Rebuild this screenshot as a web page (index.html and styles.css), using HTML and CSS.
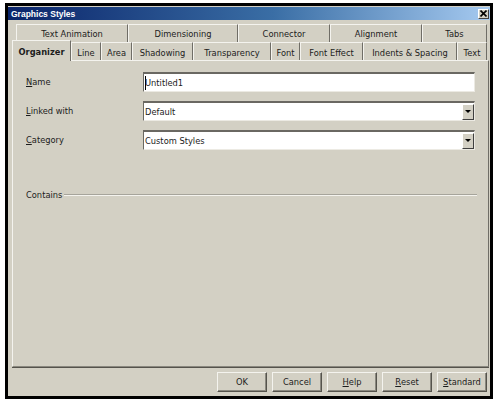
FILE: index.html
```html
<!DOCTYPE html>
<html>
<head>
<meta charset="utf-8">
<link rel="stylesheet" href="styles.css">
</head>
<body>
<div class="window">
  <div class="titlebar">
    <span class="title">Graphics Styles</span>
    <span class="close"><svg width="7" height="7" viewBox="0 0 7 7"><path d="M0.5 0.5 L6.5 6.5 M6.5 0.5 L0.5 6.5" stroke="#000" stroke-width="1.6"/></svg></span>
  </div>
  <div class="content">
    <div class="tabs">
      <div class="tabrow row1">
        <div class="tab w112">Text Animation</div>
        <div class="tab w110">Dimensioning</div>
        <div class="tab w92">Connector</div>
        <div class="tab w92">Alignment</div>
        <div class="tab w65">Tabs</div>
      </div>
      <div class="tabrow row2">
        <div class="tab selected w59">Organizer</div>
        <div class="tab w30">Line</div>
        <div class="tab w31">Area</div>
        <div class="tab w61">Shadowing</div>
        <div class="tab w78">Transparency</div>
        <div class="tab w29">Font</div>
        <div class="tab w63">Font Effect</div>
        <div class="tab w94">Indents &amp; Spacing</div>
        <div class="tab w30">Text</div>
      </div>
    </div>
    <div class="panel">
      <div class="form">
        <div class="label"><u>N</u>ame</div>
        <div class="field"><span class="caret"></span><span class="value">Untitled1</span></div>
        <div class="label"><u>L</u>inked with</div>
        <div class="field"><span class="value">Default</span><span class="drop"><span class="tri"></span></span></div>
        <div class="label"><u>C</u>ategory</div>
        <div class="field"><span class="value">Custom Styles</span><span class="drop"><span class="tri"></span></span></div>
      </div>
      <div class="contains">
        <span class="clabel">Contains</span>
        <span class="rule"></span>
      </div>
    </div>
    <div class="buttons">
      <div class="btn">OK</div>
      <div class="btn">Cancel</div>
      <div class="btn"><u>H</u>elp</div>
      <div class="btn"><u>R</u>eset</div>
      <div class="btn"><u>S</u>tandard</div>
    </div>
  </div>
</div>
</body>
</html>
```

FILE: styles.css
```css
html, body {
  margin: 0;
  padding: 0;
  background: #ffffff;
}
body {
  width: 500px;
  height: 403px;
  overflow: hidden;
  font-family: "DejaVu Sans", sans-serif;
  font-size: 8.3px;
  color: #1c1c1c;
}
.window {
  box-sizing: border-box;
  margin: 3px 0 0 5px;
  width: 488px;
  height: 396px;
  border: 3px solid #000;
  background: #d3d0c4;
  display: flex;
  flex-direction: column;
}
.titlebar {
  margin-top: 1px;
  height: 13px;
  flex: none;
  background: linear-gradient(to right, #0a246a 0%, #3a6ea5 55%, #a6caf0 100%);
  display: flex;
  align-items: center;
  justify-content: space-between;
  padding: 0 1px 0 3px;
}
.title {
  font-family: "Liberation Sans", Arial, sans-serif;
  font-weight: bold;
  font-size: 8.5px;
  color: #fff;
}
.close {
  box-sizing: border-box;
  width: 11px;
  height: 10px;
  background: #d3d0c4;
  border-top: 1px solid #fff;
  border-left: 1px solid #fff;
  border-right: 1px solid #404040;
  border-bottom: 1px solid #404040;
  display: flex;
  align-items: center;
  justify-content: center;
}
.close svg { display: block; }
.content {
  flex: 1;
  display: flex;
  flex-direction: column;
  padding: 4px 1px 4px 4px;
}
.tabs {
  flex: none;
}
.tabrow {
  display: flex;
  height: 18px;
}
.row1 {
  margin-left: 4px;
  align-items: stretch;
}
.row2 {
  align-items: flex-end;
}
.tab {
  box-sizing: border-box;
  height: 18px;
  flex: none;
  display: flex;
  align-items: center;
  justify-content: center;
  border-top: 1px solid #f4f3ee;
  border-left: 1px solid #f4f3ee;
  border-right: 1px solid #6f6d66;
  white-space: nowrap;
  background: #d3d0c4;
}
.row1 .tab { padding-top: 1px; }
.row2 .tab { padding-top: 3px; }
.tab.selected {
  height: 21px;
  margin-bottom: -1px;
  margin-top: -2px;
  position: relative;
  z-index: 1;
  font-weight: bold;
  padding-top: 2px;
}
.w112 { width: 112px; }
.w110 { width: 110px; }
.w92 { width: 92px; }
.w65 { width: 65px; }
.w59 { width: 59px; }
.w30 { width: 30px; }
.w31 { width: 31px; }
.w61 { width: 61px; }
.w78 { width: 78px; }
.w29 { width: 29px; }
.w63 { width: 63px; }
.w94 { width: 94px; }
.panel {
  box-sizing: border-box;
  height: 307px;
  width: 477px;
  flex: none;
  border-top: 1px solid #f4f3ee;
  border-left: 1px solid #f4f3ee;
  border-right: 1px solid #6f6d66;
  border-bottom: 1px solid #8a887f;
  box-shadow: 0 1px 0 #55534c;
  padding: 11px 0 0 13px;
}
.form {
  display: grid;
  grid-template-columns: 117px 332px;
  grid-auto-rows: 20px;
  row-gap: 9px;
  align-items: center;
}
.label {
  white-space: nowrap;
}
.field {
  box-sizing: border-box;
  height: 20px;
  background: #fff;
  border-top: 2px solid #6a6862;
  border-left: 1px solid #6a6862;
  border-bottom: 1px solid #eceae3;
  border-right: 1px solid #eceae3;
  display: flex;
  align-items: center;
  position: relative;
  padding-left: 1px;
}
.value {
  flex: 1;
  white-space: nowrap;
}
.caret {
  width: 1px;
  height: 14px;
  background: #000;
  margin-right: -1px;
  flex: none;
}
.drop {
  box-sizing: border-box;
  width: 12px;
  height: 16px;
  flex: none;
  background: #d3d0c4;
  border-top: 1px solid #fff;
  border-left: 1px solid #fff;
  border-right: 1px solid #404040;
  border-bottom: 1px solid #404040;
  display: flex;
  align-items: center;
  justify-content: center;
}
.tri {
  width: 0;
  height: 0;
  border-left: 3px solid transparent;
  border-right: 3px solid transparent;
  border-top: 3px solid #000;
}
.contains {
  display: flex;
  align-items: center;
  margin-top: 39px;
  width: 451px;
  height: 12px;
}
.clabel {
  white-space: nowrap;
  margin-right: 2px;
}
.rule {
  flex: 1;
  height: 0;
  border-top: 1px solid #a6a49b;
  border-bottom: 1px solid #f4f3ee;
}
.buttons {
  flex: none;
  display: flex;
  justify-content: flex-end;
  gap: 5px;
  margin-top: 5px;
  padding-right: 2px;
}
.btn {
  box-sizing: border-box;
  width: 50px;
  height: 20px;
  display: flex;
  align-items: center;
  justify-content: center;
  background: #d3d0c4;
  border-top: 1px solid #f4f3ee;
  border-left: 1px solid #f4f3ee;
  border-right: 1px solid #55534c;
  border-bottom: 1px solid #55534c;
  box-shadow: inset -1px -1px 0 #8a887f;
}
```
